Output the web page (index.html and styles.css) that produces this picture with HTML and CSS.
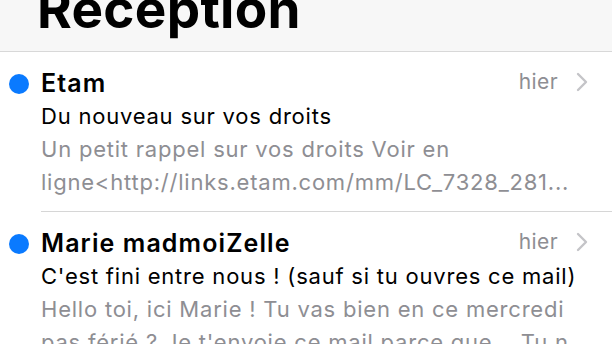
FILE: index.html
```html
<!DOCTYPE html>
<html lang="fr">
<head>
<meta charset="utf-8">
<title>Reception</title>
<link rel="stylesheet" href="styles.css">
</head>
<body>
<header class="nav">
  <h1 class="title">Reception</h1>
</header>
<ul class="list">
  <li class="mail">
    <span class="dot"></span>
    <div class="body">
      <div class="top">
        <span class="from">Etam</span>
        <span class="meta">
          <span class="date">hier</span>
          <svg class="chev" viewBox="0 0 12 20" width="12" height="20"><path d="M2 2 L10 10 L2 18" fill="none" stroke="currentColor" stroke-width="2.4" stroke-linecap="round" stroke-linejoin="round"/></svg>
        </span>
      </div>
      <div class="subject">Du nouveau sur vos droits</div>
      <div class="preview">
        <span class="line">Un petit rappel sur vos droits Voir en</span>
        <span class="line">ligne&lt;http://links.etam.com/mm/LC_7328_281...</span>
      </div>
    </div>
  </li>
  <li class="mail">
    <span class="dot"></span>
    <div class="body">
      <div class="top">
        <span class="from">Marie madmoiZelle</span>
        <span class="meta">
          <span class="date">hier</span>
          <svg class="chev" viewBox="0 0 12 20" width="12" height="20"><path d="M2 2 L10 10 L2 18" fill="none" stroke="currentColor" stroke-width="2.4" stroke-linecap="round" stroke-linejoin="round"/></svg>
        </span>
      </div>
      <div class="subject">C'est fini entre nous ! (sauf si tu ouvres ce mail)</div>
      <div class="preview">
        <span class="line">Hello toi, ici Marie ! Tu vas bien en ce mercredi</span>
        <span class="line">pas férié ? Je t'envoie ce mail parce que... Tu n...</span>
      </div>
    </div>
  </li>
</ul>
</body>
</html>
```

FILE: styles.css
```css
* { box-sizing: border-box; }

html, body {
  margin: 0;
  padding: 0;
  background: #ffffff;
  font-family: Inter, "Noto Sans", "Liberation Sans", sans-serif;
  color: #000;
  overflow: hidden;
}

.nav {
  height: 52px;
  background: #f7f7f7;
  border-bottom: 1px solid #d8d8d8;
  overflow: hidden;
  padding-left: 37px;
}

.title {
  margin: -17px 0 0 0;
  font-size: 53px;
  line-height: 52px;
  font-weight: 700;
  letter-spacing: 0.3px;
}

.list {
  list-style: none;
  margin: 0;
  padding: 0;
}

.mail {
  display: grid;
  grid-template-columns: 41px 1fr;
}

.dot {
  width: 20px;
  height: 20px;
  border-radius: 50%;
  background: #0a7aff;
  margin: 22px 0 0 9px;
}

.body {
  padding: 15px 24px 12px 0;
  border-bottom: 1px solid #d6d6d6;
  min-width: 0;
}

.top {
  display: flex;
  justify-content: space-between;
  align-items: flex-start;
  height: 33px;
}

.from {
  font-size: 25px;
  line-height: 33px;
  font-weight: 600;
  letter-spacing: 1.1px;
}

.meta {
  display: flex;
  align-items: center;
  gap: 18px;
  color: #8e8e93;
}

.date {
  font-size: 21px;
  line-height: 29px;
  letter-spacing: 0.4px;
}

.chev {
  color: #c4c4c8;
  width: 12px;
  height: 20px;
  margin-top: 1px;
}

.subject {
  font-size: 22px;
  line-height: 33px;
  letter-spacing: 0.78px;
  white-space: nowrap;
  overflow: hidden;
}

.preview {
  color: #8e8e93;
  font-size: 22px;
  line-height: 33px;
  letter-spacing: 0.78px;
}

.line {
  display: block;
  white-space: nowrap;
  overflow: hidden;
}
```
